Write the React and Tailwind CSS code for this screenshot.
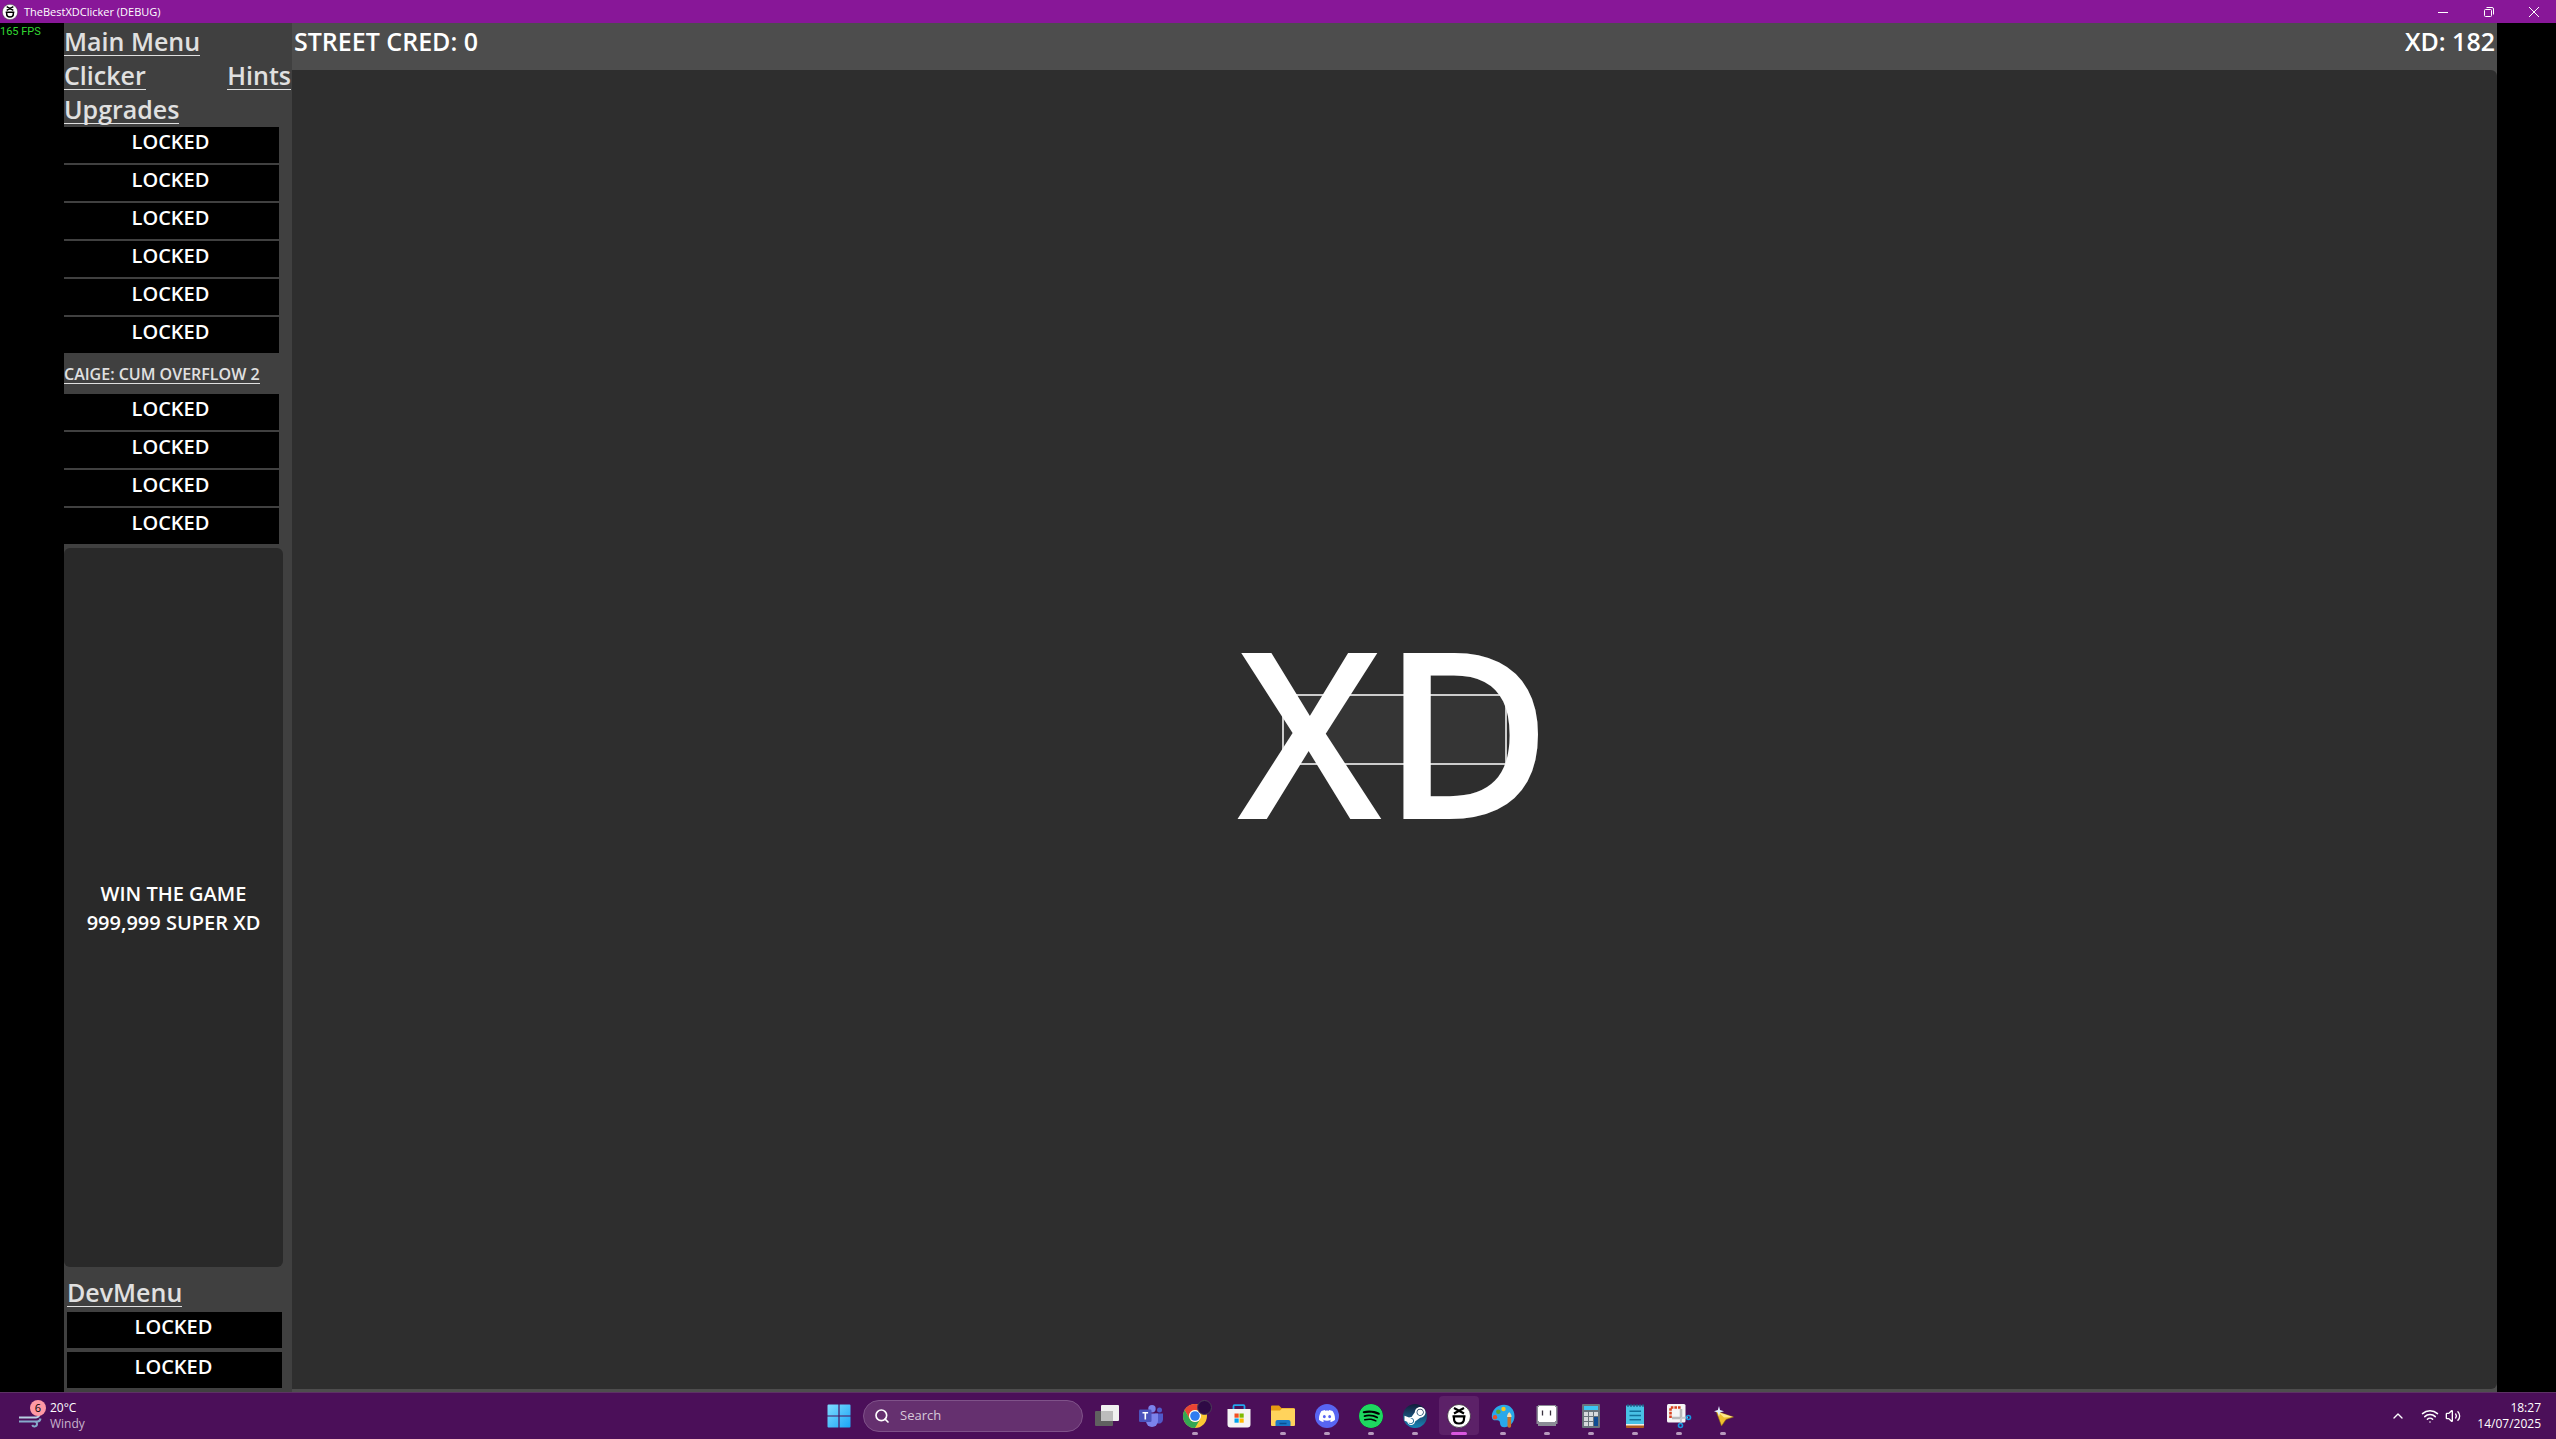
import { SiDiscord, SiSpotify } from "react-icons/si";
import { FaSteamSymbol } from "react-icons/fa";
import { ChevronUp, Search, Wifi, Volume2 } from "lucide-react";

const UPGRADES_TOP = ["clicker-1", "clicker-2", "clicker-3", "clicker-4", "clicker-5", "clicker-6"];
const UPGRADES_CAIGE = ["caige-1", "caige-2", "caige-3", "caige-4"];
const DEV_ITEMS = ["dev-1", "dev-2"];

function FaceIcon({ className }) {
  return (
    <svg viewBox="0 0 24 24" className={className} aria-hidden="true">
      <circle cx="12" cy="12" r="11.5" fill="#fff" stroke="#111" strokeWidth="0.6" />
      <path
        d="M7 4l10 5.500M17 4l-10 5.500M5.500 12.300h13M7 12.300v2.700c0 3 2 4.500 5 4.500s5-1.500 5-4.500v-2.700"
        fill="none"
        stroke="#000"
        strokeWidth="2.2"
      />
    </svg>
  );
}

function StartIcon() {
  return (
    <svg viewBox="0 0 24 24" className="size-6" aria-hidden="true">
      <defs>
        <linearGradient id="win" x1="0" y1="0" x2="1" y2="1" gradientUnits="objectBoundingBox">
          <stop offset="0" stopColor="#7fdcff" />
          <stop offset="1" stopColor="#1aa5f5" />
        </linearGradient>
      </defs>
      <path d="M1.5.5H11.4V11.4H.5V1.5a1 1 0 0 1 1-1zM12.6.5H22.5a1 1 0 0 1 1 1V11.4H12.6zM.5 12.6H11.4V23.5H1.5a1 1 0 0 1-1-1zM12.6 12.6H23.5V22.5a1 1 0 0 1-1 1H12.6z" fill="url(#win)" />
    </svg>
  );
}

function TaskViewIcon() {
  return (
    <svg viewBox="0 0 24 24" className="size-6" aria-hidden="true">
      <rect x="0" y="7" width="18" height="15" rx="1" fill="#606060" />
      <rect x="6" y="1" width="18" height="16" rx="1" fill="#f0f0f0" />
      <path d="M6 7h12v10H6z" fill="#bcbcbc" />
    </svg>
  );
}

function TeamsIcon() {
  return (
    <svg viewBox="0 0 24 24" className="size-6" aria-hidden="true">
      <circle cx="20.5" cy="6" r="2.5" fill="#5059c9" />
      <circle cx="13" cy="4.8" r="3.7" fill="#7b83eb" />
      <path d="M16 9.5h8v6a4 4 0 0 1-6 3.5z" fill="#5059c9" />
      <path d="M7 9.5h12v7.5a6 6 0 0 1-12 0z" fill="#7b83eb" />
      <rect x="0" y="5.5" width="12.5" height="12.5" rx="1.2" fill="#4b53bc" />
      <path d="M3.5 8.8h5.6M6.3 8.8v6.6" stroke="#fff" strokeWidth="1.6" />
    </svg>
  );
}

function ChromeIcon() {
  return (
    <svg viewBox="0 0 24 24" className="size-6 overflow-visible" aria-hidden="true">
      <circle cx="12" cy="12" r="12" fill="#fcc934" />
      <path d="M1.6 6A12 12 0 0 1 22.4 6H12a6 6 0 0 0-5.2 9z" fill="#ea4335" />
      <path d="M1.6 6A12 12 0 0 0 12 24l5.2-9A6 6 0 0 1 6.8 15z" fill="#34a853" />
      <circle cx="12" cy="12" r="6" fill="#fff" />
      <circle cx="12" cy="12" r="4.8" fill="#2f7df0" />
      <circle cx="21.5" cy="3.5" r="7" fill="#2e0a45" stroke="#4b3d57" />
    </svg>
  );
}

function StoreIcon() {
  return (
    <svg viewBox="0 0 24 24" className="size-6" aria-hidden="true">
      <path d="M6.5 6V2.2a1 1 0 0 1 1-1h9a1 1 0 0 1 1 1V6" fill="none" stroke="#22a7ee" strokeWidth="1.8" />
      <path d="M.5 5h23v15.5a3 3 0 0 1-3 3h-17a3 3 0 0 1-3-3z" fill="#f4f4f4" />
      <path d="M7.5 9.5h4.2v4.2H7.5z" fill="#f25022" />
      <path d="M12.5 9.5h4.2v4.2h-4.2z" fill="#7fba00" />
      <path d="M7.5 14.5h4.2v4.2H7.5z" fill="#00a4ef" />
      <path d="M12.5 14.5h4.2v4.2h-4.2z" fill="#ffb900" />
    </svg>
  );
}

function ExplorerIcon() {
  return (
    <svg viewBox="0 0 24 24" className="size-6" aria-hidden="true">
      <path d="M0 2.500a1 1 0 0 1 1-1h7l2.500 2.500h12a1 1 0 0 1 1 1v4H0z" fill="#e59b12" />
      <path d="M0 6.500h9l2-2h12.500a.8.8 0 0 1 .5.8V21a1 1 0 0 1-1 1H1a1 1 0 0 1-1-1z" fill="#ffd35c" />
      <path d="M4.500 22v-4a2 2 0 0 1 2-2h11a2 2 0 0 1 2 2v4z" fill="#1977c8" />
      <path d="M8.500 19.500h7" stroke="#0b4f91" strokeWidth="1.500" />
    </svg>
  );
}

function DiscordIcon() {
  return (
    <span className="flex size-6 items-center justify-center rounded-full bg-[#5865f2]">
      <SiDiscord className="size-4 text-white" />
    </span>
  );
}

function SpotifyIcon() {
  return (
    <span className="flex size-6 rounded-full bg-black">
      <SiSpotify className="size-6 text-[#1ed760]" />
    </span>
  );
}

function SteamIcon() {
  return (
    <span className="flex size-6 items-center justify-center rounded-full bg-linear-to-b from-[#111d3a] to-[#1387b8]">
      <FaSteamSymbol className="size-6 text-white" />
    </span>
  );
}

function PaintIcon() {
  return (
    <svg viewBox="0 0 24 24" className="size-6" aria-hidden="true">
      <path d="M13 .8C6 .8.800 6 .800 12.500c0 3 2 4.200 4.500 3.800 2.200-.4 3.700.6 3.700 2.700 0 3 2 4.500 5 4.200 5.500-.6 9.500-5.200 9.500-11.200C23.500 5.500 19 .8 13 .8z" fill="#29a8ea" />
      <circle cx="4" cy="13.300" r="2.200" fill="#e8502a" />
      <circle cx="7.300" cy="7.800" r="2.200" fill="#5ea82c" />
      <circle cx="12.500" cy="5" r="2.200" fill="#f7c71e" />
      <path d="M16.500 12.500h3.600V22a1.800 1.800 0 0 1-3.600 0z" fill="#c8732a" />
      <path d="M16 13c0-2 1-4 2.300-4.800C19.600 9 20.600 11 20.600 13z" fill="#f4dcae" />
    </svg>
  );
}

function BlockIcon() {
  return (
    <svg viewBox="0 0 24 24" className="size-6" aria-hidden="true">
      <path d="M3 1h18v1h1.500v18H21v2H3v-2H1.500V2H3z" fill="#8b8c96" />
      <path d="M4 2h16v1h1v14h-1v1H4v-1H3V3h1z" fill="#fff" />
      <path d="M7.500 6.500v5M15.500 6.500v5" stroke="#3a3340" strokeWidth="1.300" />
    </svg>
  );
}

function CalculatorIcon() {
  return (
    <svg viewBox="0 0 24 24" className="size-6" aria-hidden="true">
      <rect x="3" y="0" width="18" height="24" rx="1" fill="#69737c" />
      <rect x="5" y="2" width="14" height="4" fill="#3cc5f3" />
      <path d="M5 8h4v4H5zM10 8h4v4h-4zM15 8h4v4h-4zM5 13h4v4H5zM10 13h4v4h-4zM5 18h4v4H5zM10 18h4v4h-4z" fill="#d7dade" />
      <path d="M15 13h4v9h-4z" fill="#0f4c94" />
    </svg>
  );
}

function NotepadIcon() {
  return (
    <svg viewBox="0 0 24 24" className="size-6" aria-hidden="true">
      <path d="M3 1.500h18V22H3z" fill="#48c1e5" />
      <path d="M3 21h18v2.200a.8.800 0 0 1-.8.800H3.800a.8.800 0 0 1-.8-.8z" fill="#b05a1c" />
      <path d="M3 20h18v1.500H3z" fill="#f2efe8" />
      <path d="M5 0v3M8 0v3M11 0v3M14 0v3M17 0v3M20 0v3" stroke="#155e83" strokeWidth="1.200" />
      <path d="M6.500 7.200h11.500M6.500 11.500h11.500M6.500 15.800h11.500" stroke="#12729b" strokeWidth="1.500" />
    </svg>
  );
}

function SnippingIcon() {
  return (
    <svg viewBox="0 0 24 24" className="size-6 overflow-visible" aria-hidden="true">
      <rect x="0" y="0" width="18.500" height="18.500" rx="1.500" fill="#f5f5f5" />
      <path d="M3.500 14V3.500H14" fill="none" stroke="#d8411f" strokeWidth="2.600" strokeDasharray="2.600 1" />
      <path d="M14 5v9H5" fill="none" stroke="#b9b9b9" strokeWidth="2.500" />
      <path d="M14 14l7-.500M14 14l-.2 6" stroke="#c7c9cc" strokeWidth="2" />
      <circle cx="21.500" cy="13.500" r="2" fill="none" stroke="#1697e0" strokeWidth="1.600" />
      <circle cx="13.500" cy="21.500" r="2" fill="none" stroke="#1697e0" strokeWidth="1.600" />
    </svg>
  );
}

function CursorIcon() {
  return (
    <svg viewBox="0 0 24 24" className="size-6" aria-hidden="true">
      <path d="M5 7l17.500 6-7.500 2.500-4.500 6.500z" fill="#f0c02e" stroke="#8a6416" strokeWidth="0.600" />
      <path d="M7 8l15 5-9 .500z" fill="#ffe98a" />
      <path d="M8 2l1 4 4 1.200-4 1.200-1 4-1.200-4L3 7.200l3.800-1.200z" fill="#dff1ff" />
    </svg>
  );
}

const APPS = [
  { name: "Task View", Icon: TaskViewIcon },
  { name: "Teams", Icon: TeamsIcon },
  { name: "Chrome", Icon: ChromeIcon, open: true },
  { name: "Store", Icon: StoreIcon },
  { name: "File Explorer", Icon: ExplorerIcon, open: true },
  { name: "Discord", Icon: DiscordIcon, open: true },
  { name: "Spotify", Icon: SpotifyIcon, open: true },
  { name: "Steam", Icon: SteamIcon, open: true },
  { name: "TheBestXDClicker", Icon: () => <FaceIcon className="size-6" />, open: true, active: true },
  { name: "Paint", Icon: PaintIcon, open: true },
  { name: "Aseprite", Icon: BlockIcon, open: true },
  { name: "Calculator", Icon: CalculatorIcon, open: true },
  { name: "Notepad", Icon: NotepadIcon, open: true },
  { name: "Snipping Tool", Icon: SnippingIcon, open: true },
  { name: "Cursor", Icon: CursorIcon, open: true },
];

function TitleBar() {
  return (
    <header className="flex h-[23px] shrink-0 items-center justify-between bg-[#881798] text-white">
      <div className="flex items-center gap-1.5 pl-0.5">
        <FaceIcon className="size-4" />
        <h1 className="text-[11px] leading-4">TheBestXDClicker (DEBUG)</h1>
      </div>
      <div className="flex h-full">
        <button type="button" aria-label="Minimize" className="flex w-[46px] items-center justify-center">
          <svg viewBox="0 0 10 10" className="size-2.5" fill="none" stroke="currentColor">
            <path d="M0 5.500h10" />
          </svg>
        </button>
        <button type="button" aria-label="Restore" className="flex w-[46px] items-center justify-center">
          <svg viewBox="0 0 10 10" className="size-2.5" fill="none" stroke="currentColor">
            <rect x="0.5" y="2.5" width="7" height="7" rx="1" />
            <path d="M2.500.500h5.500a1.500 1.500 0 0 1 1.500 1.500v5.500" />
          </svg>
        </button>
        <button type="button" aria-label="Close" className="flex w-11 items-center justify-center">
          <svg viewBox="0 0 10 10" className="size-2.5" fill="none" stroke="currentColor">
            <path d="M0 0l10 10M10 0L0 10" />
          </svg>
        </button>
      </div>
    </header>
  );
}

function MenuLink({ children }) {
  return (
    <a href="#" className="block h-[33px] border-b border-[#e0e0e0] text-[25px] leading-9 text-[#e0e0e0]">
      {children}
    </a>
  );
}

function LockedButton() {
  return (
    <button type="button" className="block h-9 w-full bg-black pr-0.5 pb-1.5 text-xl leading-[30px] text-white">
      LOCKED
    </button>
  );
}

function Sidebar() {
  return (
    <nav className="flex w-[228px] shrink-0 flex-col bg-[#404040] font-semibold">
      <div className="flex flex-col items-start gap-px">
        <MenuLink>Main Menu</MenuLink>
        <div className="flex w-full justify-between pr-px">
          <MenuLink>Clicker</MenuLink>
          <MenuLink>Hints</MenuLink>
        </div>
        <MenuLink>Upgrades</MenuLink>
      </div>

      <div className="mt-[3px] flex w-[215px] flex-col gap-0.5">
        {UPGRADES_TOP.map((id) => (
          <LockedButton key={id} />
        ))}
      </div>

      <div className="flex h-[41px] items-end pb-2.5">
        <a href="#" className="border-b border-[#e0e0e0] text-base leading-[18px] whitespace-nowrap text-[#e0e0e0]">
          CAIGE: CUM OVERFLOW 2
        </a>
      </div>

      <div className="flex w-[215px] flex-col gap-0.5">
        {UPGRADES_CAIGE.map((id) => (
          <LockedButton key={id} />
        ))}
      </div>

      <button type="button" className="mt-1 w-[219px] flex-1 rounded-md bg-[#292929] text-xl leading-[29px] text-white">
        WIN THE GAME
        <br />
        999,999 SUPER XD
      </button>

      <div className="flex flex-col items-start pt-[7px] pl-[3px] pb-1">
        <MenuLink>DevMenu</MenuLink>
        <div className="mt-[5px] flex w-[215px] flex-col gap-1">
          {DEV_ITEMS.map((id) => (
            <LockedButton key={id} />
          ))}
        </div>
      </div>
    </nav>
  );
}

function Game() {
  return (
    <main className="relative flex min-h-0 flex-1 bg-black pr-[59px] pl-16">
      <span className="absolute top-px left-0 font-['Roboto'] text-[11px] leading-4 text-[#32d732]">165 FPS</span>
      <Sidebar />
      <section className="flex flex-1 flex-col bg-[#4d4d4d] pb-[3px]">
        <div className="flex h-[47px] justify-between px-0.5 text-[25px] leading-9 font-semibold text-white">
          <span>STREET CRED: 0</span>
          <span>XD: 182</span>
        </div>
        <div className="flex flex-1 items-center justify-center rounded-r-md bg-[#2e2e2e]">
          <button
            type="button"
            className="relative h-[71px] w-[225px] border-2 border-[#cccccc] bg-[#353535] text-white"
          >
            <span className="absolute inset-0 flex items-center justify-center pb-0.5 text-[232px] leading-none font-semibold">
              XD
            </span>
          </button>
        </div>
      </section>
    </main>
  );
}

function Taskbar() {
  return (
    <footer className="grid h-[47px] shrink-0 grid-cols-[1fr_auto_1fr] items-center border-t border-[#5d3265] bg-[#4b0f59] text-white">
      <div className="flex items-center gap-1 pl-[18px]">
        <div className="relative size-7">
          <svg viewBox="0 0 28 28" className="size-7" fill="none" strokeWidth="2" aria-hidden="true">
            <path d="M1 15.500h17a3.500 3.500 0 1 0-3.500-4.500" stroke="#b8cfe2" />
            <path d="M1 19.500h15.500a2.500 2.500 0 1 1-2.300 3.500M16 19.500h3.500a3.500 3.500 0 0 0 3-3" stroke="#86abcb" />
          </svg>
          <span className="absolute -top-0.5 right-0 flex size-4 items-center justify-center rounded-full bg-[#ff99a4] text-[11px] text-black">
            6
          </span>
        </div>
        <div className="text-xs leading-4">
          <p>20°C</p>
          <p className="text-[#c9b3cd]">Windy</p>
        </div>
      </div>

      <div className="flex h-full items-center pl-2">
        <button type="button" aria-label="Start" className="flex w-11 justify-center pr-1">
          <StartIcon />
        </button>
        <label className="mr-0.5 flex h-8 w-[220px] items-center gap-2.5 rounded-full border border-[#7f5289] bg-[#65306f] pl-2.5">
          <Search className="size-4" strokeWidth={2.5} aria-hidden="true" />
          <input
            type="text"
            aria-label="Search"
            placeholder="Search"
            className="w-40 bg-transparent text-[13px] outline-none placeholder:text-[#d6c8d9]"
          />
        </label>
        {APPS.map(({ name, Icon, open, active }) => (
          <button
            key={name}
            type="button"
            aria-label={name}
            className="relative flex h-full w-11 items-center justify-center"
          >
            {active && <span className="absolute inset-x-0.5 top-[3px] bottom-1 rounded-sm bg-[#5c2168]" />}
            <span className="relative">
              <Icon />
            </span>
            {open && (
              <span
                className={`absolute bottom-1 h-[3px] rounded-full ${
                  active ? "w-4 bg-[#d957e0]" : "w-1.5 bg-[#b79abd]"
                }`}
              />
            )}
          </button>
        ))}
      </div>

      <div className="flex items-center justify-end pr-[15px]">
        <ChevronUp className="mr-[15px] size-4" />
        <Wifi className="mr-1.5 size-[18px]" />
        <Volume2 className="mr-4 size-4" />
        <div className="text-right text-xs leading-4">
          <p>18:27</p>
          <p>14/07/2025</p>
        </div>
      </div>
    </footer>
  );
}

export default function App() {
  return (
    <div className="flex h-screen flex-col overflow-hidden font-['Open_Sans',sans-serif]">
      <TitleBar />
      <Game />
      <Taskbar />
    </div>
  );
}
